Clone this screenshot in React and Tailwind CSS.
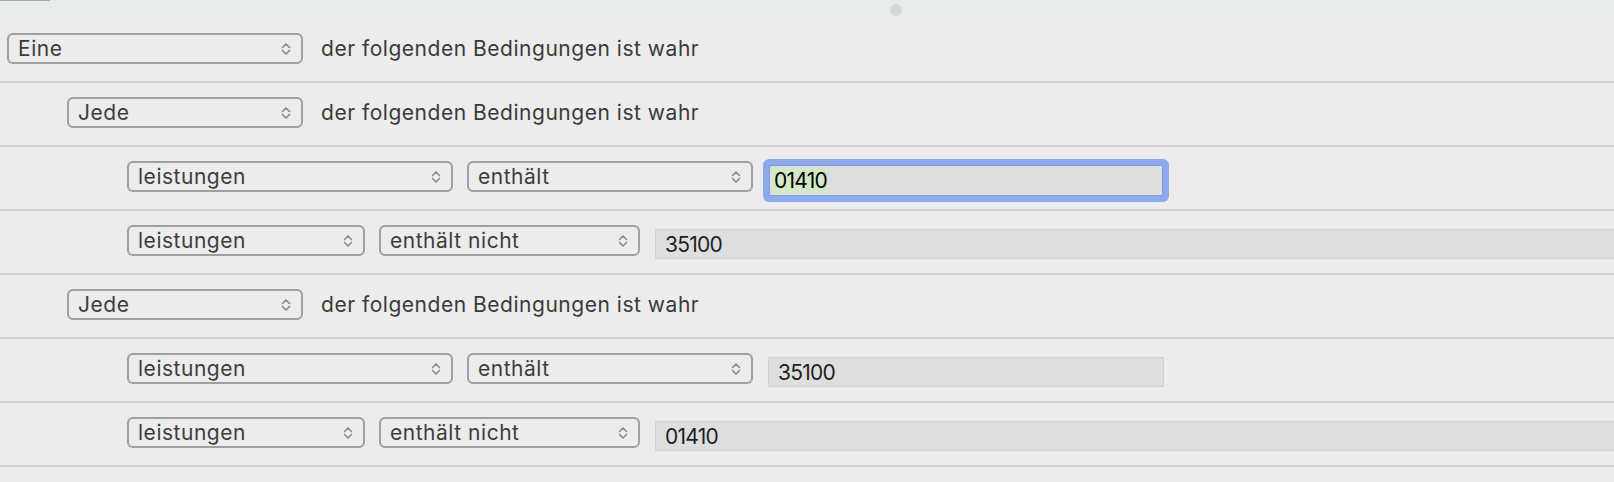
import React from "react";

const font = { fontFamily: "Inter, 'Liberation Sans', sans-serif" };

function Chevrons() {
  return (
    <svg width="10" height="14" viewBox="0 0 10 14" fill="none" className="shrink-0">
      <path d="M1.5 5.5 L5 2 L8.5 5.5" stroke="#8d8d8d" strokeWidth="1.7" strokeLinecap="round" strokeLinejoin="round" />
      <path d="M1.5 8.5 L5 12 L8.5 8.5" stroke="#8d8d8d" strokeWidth="1.7" strokeLinecap="round" strokeLinejoin="round" />
    </svg>
  );
}

function Select({ label, width }) {
  return (
    <div
      className="h-[31px] shrink-0 flex items-center justify-between pl-[9px] pr-[10px] rounded-[6px] border-2 border-[#a0a0a0] bg-[#ececec] text-[21px] tracking-[0.025em] text-[#3d3d3d] leading-none"
      style={{ width }}
    >
      <span>{label}</span>
      <Chevrons />
    </div>
  );
}

function Field({ value, width, grow, focused }) {
  if (focused) {
    return (
      <div className="ml-[2px] mt-[7px] h-[31px] w-[394px] shrink-0 flex items-center pl-[1px] bg-[#dedede] border border-[#7f9ade] rounded-[2px] shadow-[0_0_0_6px_#8eaaee] text-[21px] tracking-[-0.035em] text-black leading-none">
        <span className="bg-[#d3e8c9] pl-[3px] pr-[1px] leading-[27px]">{value}</span>
      </div>
    );
  }
  return (
    <div
      className={
        "ml-[1px] mt-[7px] h-[30px] flex items-center pl-[9px] bg-[#dedede] border border-[#d2d2d2] text-[21px] tracking-[-0.035em] text-[#1f1f1f] leading-none " +
        (grow ? "flex-1 border-r-0" : "shrink-0")
      }
      style={grow ? undefined : { width }}
    >
      {value}
    </div>
  );
}

function Row({ indent, children }) {
  return (
    <div
      className="h-[64px] border-b-2 border-[#d3d3d3] flex items-center gap-[14px] pb-[3px]"
      style={{ paddingLeft: 7 + indent * 60 }}
    >
      {children}
    </div>
  );
}

function GroupRow({ indent, label, width }) {
  return (
    <Row indent={indent}>
      <Select label={label} width={width} />
      <span className="ml-[4px] text-[21px] tracking-[0.025em] text-[#3a3a3a] leading-none">
        der folgenden Bedingungen ist wahr
      </span>
    </Row>
  );
}

export default function App() {
  return (
    <div className="w-[1614px] h-[482px] overflow-hidden bg-[#ececec]" style={font}>
      <div className="h-[19px] bg-[#e9eced] relative flex items-center">
        <div className="absolute left-0 top-0 w-[50px] h-px bg-[#a9a9a9]" />
        <div className="ml-[890px] w-[12px] h-[12px] rounded-full bg-[#d6d7d9]" />
      </div>

      <GroupRow indent={0} label="Eine" width={296} />
      <GroupRow indent={1} label="Jede" width={236} />

      <Row indent={2}>
        <Select label="leistungen" width={326} />
        <Select label="enthält" width={286} />
        <Field value="01410" focused />
      </Row>
      <Row indent={2}>
        <Select label="leistungen" width={238} />
        <Select label="enthält nicht" width={261} />
        <Field value="35100" grow />
      </Row>

      <GroupRow indent={1} label="Jede" width={236} />

      <Row indent={2}>
        <Select label="leistungen" width={326} />
        <Select label="enthält" width={286} />
        <Field value="35100" width={396} />
      </Row>
      <Row indent={2}>
        <Select label="leistungen" width={238} />
        <Select label="enthält nicht" width={261} />
        <Field value="01410" grow />
      </Row>
    </div>
  );
}
